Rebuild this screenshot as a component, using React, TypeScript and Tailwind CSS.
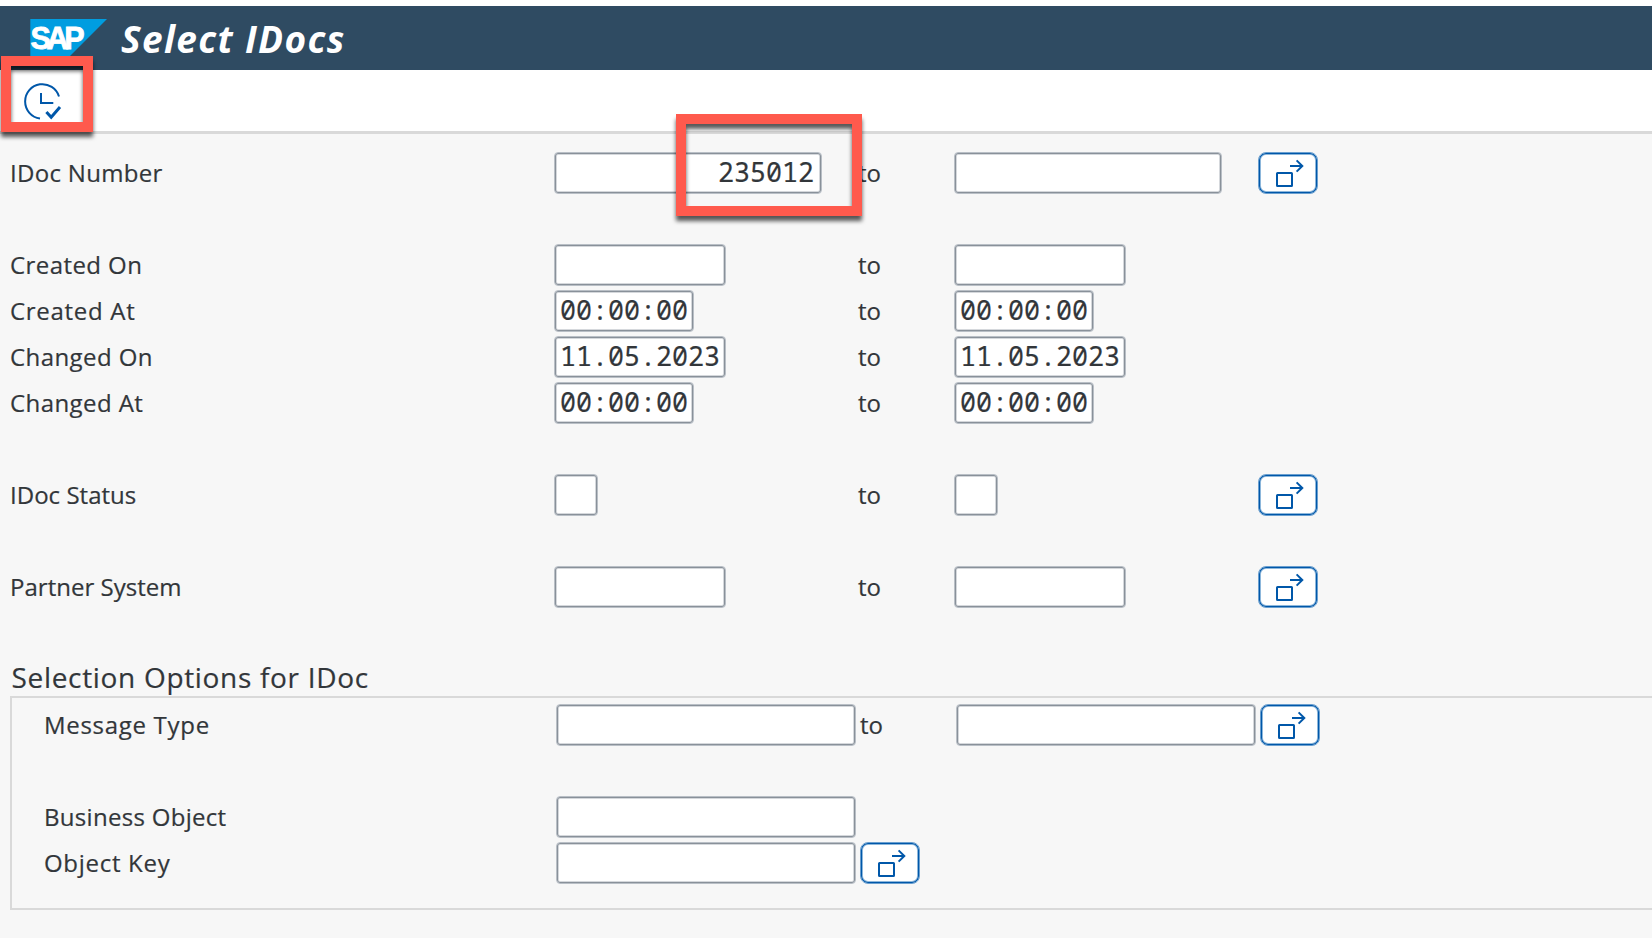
import type { ReactNode } from "react";

const widths = {
  flag: "w-[44px]",
  time: "w-[140px]",
  date: "w-[172px]",
  number: "w-[268px]",
  long: "w-[300px]",
};

const spacings = {
  none: "tracking-[0.02px]",
  snug: "tracking-[0.3px]",
  normal: "tracking-[0.42px]",
  wide: "tracking-[0.7px]",
};

type Size = keyof typeof widths;
type Spacing = keyof typeof spacings;

function Field({ size, value = "", align = "left" }: { size: Size; value?: string; align?: "left" | "right" }) {
  return (
    <div
      className={`flex h-[42px] items-center rounded-[4px] border border-[#b9bfc6] bg-white pb-px pl-[5px] pr-[7px] font-['Noto_Sans_Mono','DejaVu_Sans_Mono',monospace] text-[26.67px] leading-none font-normal tracking-normal whitespace-pre shadow-[inset_0_0_0_1px_#89919a,inset_0_0_0_2px_#d5d8dc] ${
        align === "right" ? "justify-end" : "justify-start"
      } ${widths[size]}`}
    >
      {value}
    </div>
  );
}

function MultipleSelection() {
  return (
    <button
      type="button"
      aria-label="Multiple selection"
      className="h-[42px] w-[60px] rounded-[8px] border border-[#6a9fcf] bg-white shadow-[inset_0_0_0_1px_#0057a9,inset_0_0_0_2px_#8db7db]"
    >
      <svg className="-m-px block" width="60" height="42" viewBox="0 0 60 42" fill="none" stroke="#0057a9" strokeWidth="2">
        <rect x="19" y="21" width="15" height="13" rx="0.5" />
        <path d="M32 14H44.5M38.6 8.4L44.3 14L38.6 19.6" />
      </svg>
    </button>
  );
}

function Row({
  label,
  from,
  to,
  more,
  spacing = "normal",
  nested = false,
}: {
  label: string;
  from: ReactNode;
  to?: ReactNode;
  more?: ReactNode;
  spacing?: Spacing;
  nested?: boolean;
}) {
  return (
    <div
      className={`grid h-[42px] items-center ${
        nested ? "grid-cols-[512px_304px_96px_304px_60px]" : "grid-cols-[544px_304px_96px_304px_60px]"
      }`}
    >
      <span className={`whitespace-nowrap ${spacings[spacing]}`}>{label}</span>
      {from}
      {to ? <span className="tracking-normal">to</span> : more}
      {to}
      {to ? more : null}
    </div>
  );
}

function SapLogo() {
  return (
    <svg className="ml-[30px] mt-[13px] block shrink-0" width="78" height="39" viewBox="0 0 78 39">
      <path d="M0.3 0H77L38.5 38.5H0.3Z" fill="#009de0" />
      <text
        x="0.5"
        y="29.6"
        textLength="54"
        lengthAdjust="spacing"
        fill="#fff"
        stroke="#fff"
        strokeWidth="0.8"
        className="font-['Liberation_Sans',sans-serif] text-[30.5px] font-bold"
      >
        SAP
      </text>
    </svg>
  );
}

function ExecuteIcon() {
  return (
    <svg className="block" width="40" height="38" viewBox="0 0 40 38" fill="none" stroke="#0057a9">
      <path d="M36 14.5A17.3 17.3 0 1 0 17 36.6" strokeWidth="2" />
      <path d="M18 11V21H30.3" strokeWidth="2" />
      <path d="M23.4 30L28.2 35.2L37 25" strokeWidth="3" />
    </svg>
  );
}

export default function App() {
  return (
    <div className="relative h-[938px] w-[1652px] overflow-hidden bg-[#f7f7f7] font-['Open_Sans','Noto_Sans',sans-serif] text-[24px] font-medium text-[#32363a]">
      <div className="h-1.5 bg-white" />
      <header className="flex h-16 bg-[#2f4b62]">
        <SapLogo />
        <h1 className="ml-[13px] flex items-center text-[37px] leading-none font-bold tracking-[1.35px] text-white italic">
          Select IDocs
        </h1>
      </header>
      <div className="h-16 border-b-[3px] border-[#d9d9d9] bg-white pt-[12px] pl-[23px]">
        <button type="button" aria-label="Execute" className="block">
          <ExecuteIcon />
        </button>
      </div>

      <main className="pt-[18px] pl-[10px] [-webkit-text-stroke:0.2px_#32363a]">
        <Row
          label="IDoc Number"
          spacing="snug"
          from={<Field size="number" value="235012" align="right" />}
          to={<Field size="number" />}
          more={<MultipleSelection />}
        />
        <div className="mt-[50px] flex flex-col gap-1">
          <Row label="Created On" from={<Field size="date" />} to={<Field size="date" />} />
          <Row
            label="Created At"
            spacing="wide"
            from={<Field size="time" value="00:00:00" />}
            to={<Field size="time" value="00:00:00" />}
          />
          <Row label="Changed On" from={<Field size="date" value="11.05.2023" />} to={<Field size="date" value="11.05.2023" />} />
          <Row
            label="Changed At"
            spacing="normal"
            from={<Field size="time" value="00:00:00" />}
            to={<Field size="time" value="00:00:00" />}
          />
        </div>
        <div className="mt-[50px] flex flex-col gap-[50px]">
          <Row
            label="IDoc Status"
            spacing="none"
            from={<Field size="flag" />}
            to={<Field size="flag" />}
            more={<MultipleSelection />}
          />
          <Row
            label="Partner System"
            spacing="none"
            from={<Field size="date" />}
            to={<Field size="date" />}
            more={<MultipleSelection />}
          />
        </div>

        <section className="mt-[50px]">
          <h2 className="flex h-[38px] items-center pl-[1.5px] text-[28px] leading-none tracking-[0.68px]">
            Selection Options for IDoc
          </h2>
          <div className="h-[214px] w-[1660px] border-2 border-[#d9d9d9] pt-[6px] pl-[32px]">
            <Row
              nested
              label="Message Type"
              spacing="wide"
              from={<Field size="long" />}
              to={<Field size="long" />}
              more={<MultipleSelection />}
            />
            <div className="mt-[50px] flex flex-col gap-1">
              <Row nested label="Business Object" spacing="snug" from={<Field size="long" />} />
              <Row nested label="Object Key" spacing="wide" from={<Field size="long" />} more={<MultipleSelection />} />
            </div>
          </div>
        </section>
      </main>

      <div className="pointer-events-none absolute top-[56px] left-px h-[76px] w-[92px] border-[10px] border-[#ff5a4d] drop-shadow-[0_5px_2px_rgba(0,0,0,0.65)]" />
      <div className="pointer-events-none absolute top-[114px] left-[676px] h-[102px] w-[186px] border-[10px] border-[#ff5a4d] drop-shadow-[0_5px_2px_rgba(0,0,0,0.65)]" />
    </div>
  );
}
